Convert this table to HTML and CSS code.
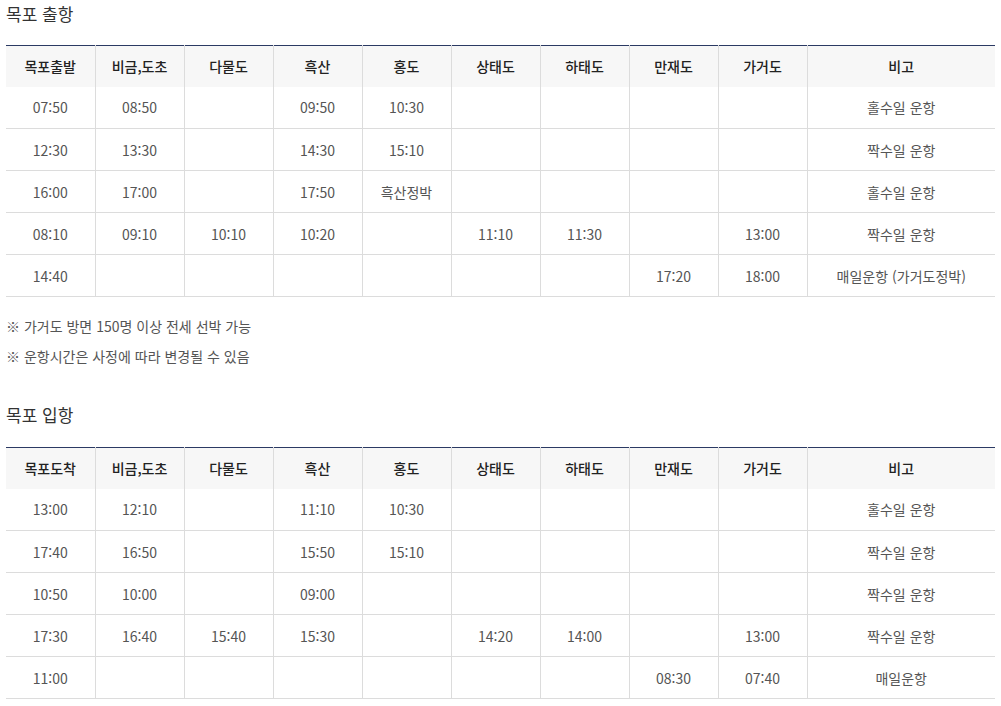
FILE: index.html
```html
<!DOCTYPE html>
<html lang="ko">
<head>
<meta charset="utf-8">
<link rel="stylesheet" href="styles.css">
</head>
<body>
<div class="page">
  <h3 class="title">목포 출항</h3>
  <table class="sched">
    <colgroup>
      <col class="c"><col class="c"><col class="c"><col class="c"><col class="c"><col class="c"><col class="c"><col class="c"><col class="c"><col class="last">
    </colgroup>
    <thead>
      <tr><th>목포출발</th><th>비금,도초</th><th>다물도</th><th>흑산</th><th>홍도</th><th>상태도</th><th>하태도</th><th>만재도</th><th>가거도</th><th>비고</th></tr>
    </thead>
    <tbody>
      <tr><td>07:50</td><td>08:50</td><td></td><td>09:50</td><td>10:30</td><td></td><td></td><td></td><td></td><td>홀수일 운항</td></tr>
      <tr><td>12:30</td><td>13:30</td><td></td><td>14:30</td><td>15:10</td><td></td><td></td><td></td><td></td><td>짝수일 운항</td></tr>
      <tr><td>16:00</td><td>17:00</td><td></td><td>17:50</td><td>흑산정박</td><td></td><td></td><td></td><td></td><td>홀수일 운항</td></tr>
      <tr><td>08:10</td><td>09:10</td><td>10:10</td><td>10:20</td><td></td><td>11:10</td><td>11:30</td><td></td><td>13:00</td><td>짝수일 운항</td></tr>
      <tr><td>14:40</td><td></td><td></td><td></td><td></td><td></td><td></td><td>17:20</td><td>18:00</td><td>매일운항 (가거도정박)</td></tr>
    </tbody>
  </table>
  <ul class="notes">
    <li>※ 가거도 방면 150명 이상 전세 선박 가능</li>
    <li>※ 운항시간은 사정에 따라 변경될 수 있음</li>
  </ul>
  <h3 class="title second">목포 입항</h3>
  <table class="sched">
    <colgroup>
      <col class="c"><col class="c"><col class="c"><col class="c"><col class="c"><col class="c"><col class="c"><col class="c"><col class="c"><col class="last">
    </colgroup>
    <thead>
      <tr><th>목포도착</th><th>비금,도초</th><th>다물도</th><th>흑산</th><th>홍도</th><th>상태도</th><th>하태도</th><th>만재도</th><th>가거도</th><th>비고</th></tr>
    </thead>
    <tbody>
      <tr><td>13:00</td><td>12:10</td><td></td><td>11:10</td><td>10:30</td><td></td><td></td><td></td><td></td><td>홀수일 운항</td></tr>
      <tr><td>17:40</td><td>16:50</td><td></td><td>15:50</td><td>15:10</td><td></td><td></td><td></td><td></td><td>짝수일 운항</td></tr>
      <tr><td>10:50</td><td>10:00</td><td></td><td>09:00</td><td></td><td></td><td></td><td></td><td></td><td>짝수일 운항</td></tr>
      <tr><td>17:30</td><td>16:40</td><td>15:40</td><td>15:30</td><td></td><td>14:20</td><td>14:00</td><td></td><td>13:00</td><td>짝수일 운항</td></tr>
      <tr><td>11:00</td><td></td><td></td><td></td><td></td><td></td><td></td><td>08:30</td><td>07:40</td><td>매일운항</td></tr>
    </tbody>
  </table>
</div>
</body>
</html>
```
FILE: styles.css
```css
* { box-sizing: border-box; }
html, body { margin: 0; padding: 0; background: #fff; }
body {
  font-family: "Noto Sans CJK KR", "Noto Sans", sans-serif;
  color: #555;
}
.page {
  width: 988px;
  margin-left: 6px;
}
.title {
  margin: 0;
  font-size: 17px;
  font-weight: 400;
  color: #333;
  line-height: 28px;
  height: 45px;
}
.title.second {
  margin-top: 30px;
  height: 46px;
}
.sched {
  width: 988px;
  table-layout: fixed;
  border-collapse: collapse;
  border-top: 1px solid #2b3a63;
}
.sched col.c { width: 89px; }
.sched col.last { width: 188px; }
.sched th,
.sched td {
  height: 42px;
  padding: 0;
  text-align: center;
  font-size: 14px;
  border-left: 1px solid #dcdcdc;
  border-right: 1px solid #dcdcdc;
}
.sched th:first-child, .sched td:first-child { border-left: 0; }
.sched th:last-child, .sched td:last-child { border-right: 0; }
.sched th {
  height: 41px;
  background: #f7f7f7;
  color: #222;
  font-weight: 500;
}
.sched td {
  border-bottom: 1px solid #dcdcdc;
  color: #555;
}
.notes {
  list-style: none;
  margin: 14px 0 0;
  padding: 0;
}
.notes li {
  font-size: 14px;
  line-height: 30px;
  color: #555;
}
```
